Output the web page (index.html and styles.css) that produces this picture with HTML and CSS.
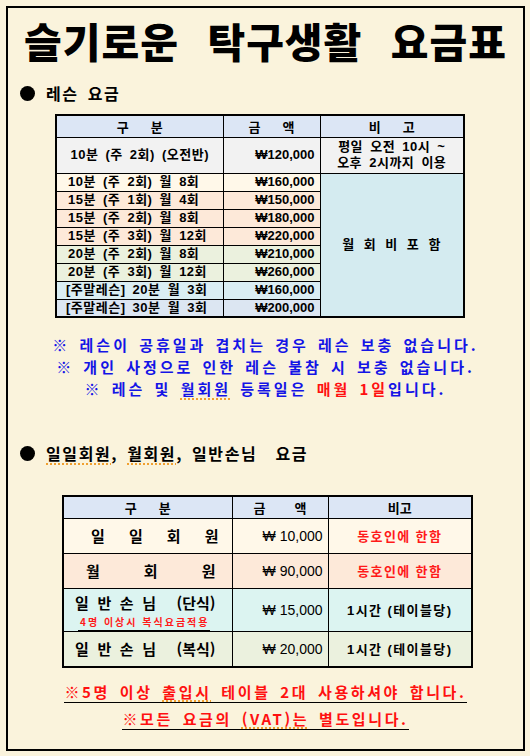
FILE: index.html
```html
<!DOCTYPE html>
<html lang="ko">
<head>
<meta charset="utf-8">
<link rel="stylesheet" href="styles.css">
</head>
<body>
<div class="frame">
  <h1 class="title">슬기로운 탁구생활 요금표</h1>

  <div class="sec-head"><span class="dot"></span><span>레슨 요금</span></div>

  <table class="t1">
    <colgroup><col class="c1"><col class="c2"><col class="c3"></colgroup>
    <tr class="hd"><th>구&nbsp;&nbsp;&nbsp;&nbsp;&nbsp;&nbsp;분</th><th>금&nbsp;&nbsp;&nbsp;&nbsp;&nbsp;&nbsp;액</th><th>비&nbsp;&nbsp;&nbsp;&nbsp;&nbsp;&nbsp;고</th></tr>
    <tr class="r-gray tall"><td class="ctr">10분 (주 2회) (오전반)</td><td class="amt">₩120,000</td><td class="ctr note2">평일 오전 10시 ~<br>오후 2시까지 이용</td></tr>
    <tr class="r-cream"><td>10분 (주 2회) 월 8회</td><td class="amt">₩160,000</td><td class="merged" rowspan="8">월 회 비 포 함</td></tr>
    <tr class="r-pink"><td>15분 (주 1회) 월 4회</td><td class="amt">₩150,000</td></tr>
    <tr class="r-pink"><td>15분 (주 2회) 월 8회</td><td class="amt">₩180,000</td></tr>
    <tr class="r-pink"><td>15분 (주 3회) 월 12회</td><td class="amt">₩220,000</td></tr>
    <tr class="r-green"><td>20분 (주 2회) 월 8회</td><td class="amt">₩210,000</td></tr>
    <tr class="r-green"><td>20분 (주 3회) 월 12회</td><td class="amt">₩260,000</td></tr>
    <tr class="r-cyan"><td class="wk">[주말레슨] 20분 월 3회</td><td class="amt">₩160,000</td></tr>
    <tr class="r-blue"><td class="wk">[주말레슨] 30분 월 3회</td><td class="amt">₩200,000</td></tr>
  </table>

  <div class="notes">
    <p>※ 레슨이 공휴일과 겹치는 경우 레슨 보충 없습니다.</p>
    <p>※ 개인 사정으로 인한 레슨 불참 시 보충 없습니다.</p>
    <p>※ 레슨 및 <span class="spell">월회원</span> 등록일은 <span class="red">매월 1일</span>입니다.</p>
  </div>

  <div class="sec-head sec2"><span class="dot"></span><span><span class="spell">일일회원</span>, <span class="spell">월회원</span>, 일반손님&nbsp; 요금</span></div>

  <table class="t2">
    <colgroup><col class="d1"><col class="d2"><col class="d3"></colgroup>
    <tr class="hd"><th>구&nbsp;&nbsp;&nbsp;&nbsp;&nbsp;&nbsp;분</th><th>금&nbsp;&nbsp;&nbsp;&nbsp;&nbsp;&nbsp;&nbsp;&nbsp;액</th><th>비고</th></tr>
    <tr class="r-cream h35">
      <td><div class="spread s-a"><span>일</span><span>일</span><span>회</span><span>원</span></div></td>
      <td class="amt2">₩ 10,000</td><td class="ctr redt">동호인에 한함</td></tr>
    <tr class="r-pink h35">
      <td><div class="spread s-b"><span>월</span><span>회</span><span>원</span></div></td>
      <td class="amt2">₩ 90,000</td><td class="ctr redt">동호인에 한함</td></tr>
    <tr class="r-aqua h39">
      <td class="guest"><div class="spread s-c"><span>일</span><span>반</span><span>손</span><span>님</span><span class="gap">(단식)</span></div>
        <div class="sub"><span>4명 이상시 복식요금적용</span></div></td>
      <td class="amt2">₩ 15,000</td><td class="ctr">1시간 (테이블당)</td></tr>
    <tr class="r-green h36">
      <td><div class="spread s-c"><span>일</span><span>반</span><span>손</span><span>님</span><span class="gap">(복식)</span></div></td>
      <td class="amt2">₩ 20,000</td><td class="ctr">1시간 (테이블당)</td></tr>
  </table>

  <div class="footer">
    <p><span class="ul">※5명 이상 <span class="spell">출입시</span> 테이블 2대 사용하셔야 합니다.</span></p>
    <p><span class="ul">※모든 요금의 <span class="spell">(VAT)는</span> 별도입니다.</span></p>
  </div>
</div>
</body>
</html>
```
FILE: styles.css
```css
html, body {
  margin: 0;
  padding: 0;
  background: #faf3dc;
}
body {
  font-family: "Liberation Sans", "Noto Sans CJK KR", sans-serif;
  color: #000;
}
.frame {
  margin: 6px 0 0 6px;
  width: 515px;
  height: 741px;
  border: 2px solid #000;
  background: #faf3dc;
}
.title {
  margin: 0;
  height: 64px;
  line-height: 64px;
  text-align: center;
  font-family: "Noto Sans CJK KR", sans-serif;
  font-weight: 900;
  font-size: 41px;
  letter-spacing: 1px;
  word-spacing: 16px;
}
.sec-head {
  display: flex;
  align-items: center;
  height: 18px;
  margin: 12px 0 0 12px;
  font-family: "Noto Sans CJK KR", sans-serif;
  font-weight: 700;
  font-size: 16px;
  letter-spacing: 1.6px;
  word-spacing: 3px;
}
.dot {
  display: inline-block;
  width: 15px;
  height: 15px;
  border-radius: 50%;
  background: #000;
  margin-right: 11px;
}
.spell {
  text-decoration: underline dotted #f0a030;
  text-underline-offset: 3px;
  text-decoration-thickness: 2px;
}
table {
  border-collapse: collapse;
  font-family: "Liberation Sans", "Noto Sans CJK KR", sans-serif;
}
td, th {
  border: 1px solid #000;
  padding: 0;
}
.t1 {
  margin: 12px 0 0 47px;
  width: 408px;
  border: 2px solid #000;
  font-size: 13px;
  font-weight: 700;
  table-layout: fixed;
}
.c1 { width: 167px; }
.c2 { width: 97px; }
.c3 { width: 144px; }
.t1 tr { height: 18px; }
.t1 .hd { height: 22px; }
.t1 .tall { height: 36px; }
.hd { background: #dce6f5; }
.hd th { font-weight: 700; font-size: 13px; font-family: "Noto Sans CJK KR", sans-serif; }
.t1 td {
  padding-left: 11px;
  white-space: nowrap;
  line-height: 16px;
  letter-spacing: 0.5px;
  word-spacing: 3px;
}
.t1 td.wk { padding-left: 9px; }
.t1 td.ctr { text-align: center; padding-left: 0; }
.t1 td.amt { text-align: right; padding: 0 5px 0 0; letter-spacing: 0; word-spacing: 0; }
.t1 td.note2 { line-height: 16px; }
.t1 td.merged {
  background: #d4ebf0;
  text-align: center;
  padding-left: 0;
  letter-spacing: 1px;
  word-spacing: 4px;
  vertical-align: middle;
}
.r-gray { background: #f2f2f2; }
.r-cream { background: #fff8e9; }
.r-pink { background: #fde9d9; }
.r-green { background: #ebf1de; }
.r-cyan { background: #daeef3; }
.r-blue { background: #dce6f2; }
.r-aqua { background: #dcf4f1; }

.notes {
  margin-top: 16px;
  text-align: center;
  color: #1414e6;
  font-family: "Noto Sans CJK KR", sans-serif;
  font-weight: 700;
  font-size: 15px;
  letter-spacing: 3px;
  word-spacing: 2px;
}
.notes p { margin: 0; line-height: 22px; }
.notes .spell { text-decoration-color: #f0a030; }
.red { color: #ff1010; }

.sec2 { margin-top: 44px; }

.t2 {
  margin: 33px 0 0 54px;
  width: 409px;
  border: 2px solid #000;
  table-layout: fixed;
  font-size: 14px;
}
.d1 { width: 169px; }
.d2 { width: 96px; }
.d3 { width: 144px; }
.t2 .hd { height: 22px; }
.t2 td { border-width: 1.5px; }
.t2 th { border-width: 1.5px; }
.h35 { height: 35px; }
.h39 { height: 39px; }
.h36 { height: 36px; }
.t2 td.amt2 { text-align: right; padding-right: 5px; font-size: 14px; }
.t2 td.ctr { text-align: center; font-size: 13px; font-weight: 700; letter-spacing: 1.4px; }
.redt { color: #ff1a1a; }
.spread {
  display: flex;
  justify-content: space-between;
  font-family: "Noto Sans CJK KR", sans-serif;
  font-weight: 700;
  font-size: 15px;
}
.s-a { padding: 0 13px 0 27px; }
.s-b { padding: 0 16px 0 22px; }
.s-c { padding: 0 16px 0 11px; }
.s-c .gap { margin-left: 12px; }
.guest { vertical-align: top; padding-top: 3px; }
.sub { padding-left: 14px; margin-top: 1px; line-height: 14px; }
.sub span {
  display: inline-block;
  color: #ff1a1a;
  font-family: "Noto Sans CJK KR", sans-serif;
  font-weight: 700;
  font-size: 10px;
  letter-spacing: 2px;
  border-bottom: 1px solid #000;
  padding: 0 0 1px 2px;
}

.footer {
  margin-top: 14px;
  text-align: center;
  color: #ff1010;
  font-family: "Noto Sans CJK KR", sans-serif;
  font-weight: 700;
  font-size: 15px;
  letter-spacing: 2.6px;
  word-spacing: 3px;
}
.footer p { margin: 0; height: 27px; line-height: 20px; }
.ul {
  display: inline-block;
  border-bottom: 1.5px solid #000;
  line-height: 20px;
}
.footer .spell { text-underline-offset: 2px; }
```
